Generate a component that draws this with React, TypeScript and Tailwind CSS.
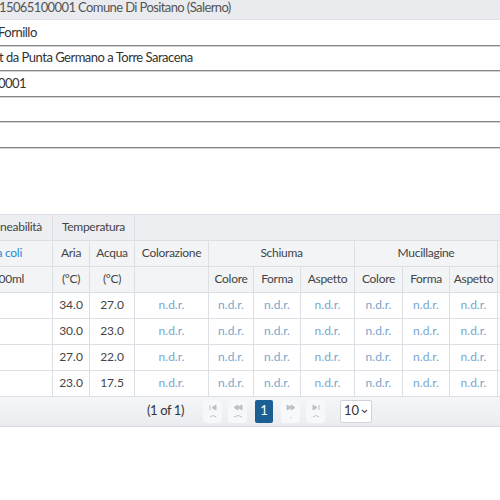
import React from 'react';

const font = { fontFamily: 'Lato, "Open Sans", sans-serif' };

const infoRows = [
  { text: 'Fornillo', shift: '-ml-[2px]' },
  { text: 't da Punta Germano a Torre Saracena', shift: '-ml-[1px]' },
  { text: '0001', shift: '-ml-[2px]' },
  { text: '', shift: '' },
  { text: '', shift: '' },
];

const data = [
  ['34.0', '27.0'],
  ['30.0', '23.0'],
  ['27.0', '22.0'],
  ['23.0', '17.5'],
];

const widths = [152, 37, 45, 74, 45, 47, 54, 48, 47, 48, 60];

function PagerIcon({ kind }: { kind: 'first' | 'prev' | 'next' | 'last' }) {
  return (
    <svg width="12" height="18" viewBox="0 0 12 18" fill="none" stroke="#bcc1c7" strokeWidth="1">
      {kind === 'first' && (
        <>
          <path d="M3 3v5" />
          <path d="M9 3L5 5.5 9 8z" fill="#bcc1c7" />
          <path d="M3 15q3-3 6 0" />
        </>
      )}
      {kind === 'prev' && (
        <>
          <path d="M6 3L2 5.5 6 8z" fill="#bcc1c7" />
          <path d="M10 3L6 5.5 10 8z" fill="#bcc1c7" />
          <path d="M2 15q4-3 8 0" />
        </>
      )}
      {kind === 'next' && (
        <>
          <path d="M2 3l4 2.5L2 8z" fill="#bcc1c7" />
          <path d="M6 3l4 2.5L6 8z" fill="#bcc1c7" />
          <path d="M6 15v1" />
        </>
      )}
      {kind === 'last' && (
        <>
          <path d="M3 3l4 2.5L3 8z" fill="#bcc1c7" />
          <path d="M9 3v5" />
          <path d="M3 15q3-3 6 0" />
        </>
      )}
    </svg>
  );
}

export default function App() {
  const th = 'border border-[#dcdfe3] font-normal text-[12px] tracking-[-0.3px] h-[26px] p-0 text-center';
  const td = 'border border-[#dcdfe3] h-[26px] p-0 text-center text-[12px]';

  return (
    <div className="w-[500px] h-[500px] overflow-hidden bg-white" style={font}>
      <div className="-mt-[4px]">
        <div className="h-[24px] bg-[#e9ebee] border-b border-[#dfe1e4] flex items-center text-[13px] tracking-[-0.6px] text-[#555]">
          <span className="-ml-[1px]">15065100001 Comune Di Positano (Salerno)</span>
        </div>
        {infoRows.map((r, i) => (
          <div
            key={i}
            className="h-[25.5px] border-b border-[#858585] shadow-[0_1px_0_#d4d4d4] flex items-center text-[13px] tracking-[-0.5px] text-[#333]"
          >
            <span className={r.shift}>{r.text}</span>
          </div>
        ))}
      </div>

      <div className="mt-[66px] -ml-[100px] w-[700px]">
        <table className="table-fixed border-collapse" style={{ width: widths.reduce((a, b) => a + b, 0) }}>
          <colgroup>
            {widths.map((w, i) => (
              <col key={i} style={{ width: w }} />
            ))}
          </colgroup>
          <thead className="text-[#444]">
            <tr className="bg-[#eceef1]">
              <th className={`${th} text-right pr-[10px]`}>Balneabilità</th>
              <th className={th} colSpan={2}>Temperatura</th>
              <th className={th} colSpan={8}></th>
            </tr>
            <tr className="bg-[#f3f4f6]">
              <th className={`${th} text-right pr-[30px] text-[#2a8ad4]`}>Escherichia coli</th>
              <th className={th}>Aria</th>
              <th className={th}>Acqua</th>
              <th className={th}>Colorazione</th>
              <th className={th} colSpan={3}>Schiuma</th>
              <th className={th} colSpan={3}>Mucillagine</th>
              <th className={th}></th>
            </tr>
            <tr className="bg-[#f3f4f6]">
              <th className={`${th} text-right pr-[28px]`}>UFC/100ml</th>
              <th className={th}>(°C)</th>
              <th className={th}>(°C)</th>
              <th className={th}></th>
              <th className={th}>Colore</th>
              <th className={th}>Forma</th>
              <th className={th}>Aspetto</th>
              <th className={th}>Colore</th>
              <th className={th}>Forma</th>
              <th className={th}>Aspetto</th>
              <th className={th}></th>
            </tr>
          </thead>
          <tbody>
            {data.map((row, i) => (
              <tr key={i} className="bg-white">
                <td className={td}></td>
                <td className={`${td} text-[#444]`}>{row[0]}</td>
                <td className={`${td} text-[#444]`}>{row[1]}</td>
                {Array.from({ length: 8 }).map((_, j) => (
                  <td key={j} className={`${td} text-[11px] text-[#7aa6cd]`}>
                    n.d.r.
                  </td>
                ))}
              </tr>
            ))}
          </tbody>
        </table>
      </div>

      <div className="h-[30px] bg-gradient-to-b from-[#f5f6f8] to-[#eaecef] border-b border-[#d6d9dd] flex items-center pl-[147px] text-[13px] text-[#333]">
        <span className="tracking-[-0.4px]">(1 of 1)</span>
        <div className="ml-[19px] flex items-center gap-[6px]">
          <span className="w-[19px] h-[23px] flex items-center justify-center bg-[#f7f8f9] rounded-sm">
            <PagerIcon kind="first" />
          </span>
          <span className="w-[19px] h-[23px] flex items-center justify-center bg-[#f7f8f9] rounded-sm">
            <PagerIcon kind="prev" />
          </span>
          <span className="ml-[2px] w-[18px] h-[23px] flex items-center justify-center bg-[#1c5f95] text-white rounded-[2px]">
            1
          </span>
          <span className="ml-[2px] w-[19px] h-[23px] flex items-center justify-center bg-[#f7f8f9] rounded-sm">
            <PagerIcon kind="next" />
          </span>
          <span className="w-[19px] h-[23px] flex items-center justify-center bg-[#f7f8f9] rounded-sm">
            <PagerIcon kind="last" />
          </span>
        </div>
        <div className="ml-[15px] w-[32px] h-[23px] bg-white border border-[#d0d3d7] rounded-[2px] flex items-center justify-center gap-[2px] text-[13px] text-[#333]">
          <span>10</span>
          <svg width="7" height="5" viewBox="0 0 7 5" fill="none" stroke="#555" strokeWidth="1.2">
            <path d="M1 1l2.5 2.5L6 1" />
          </svg>
        </div>
      </div>
    </div>
  );
}
